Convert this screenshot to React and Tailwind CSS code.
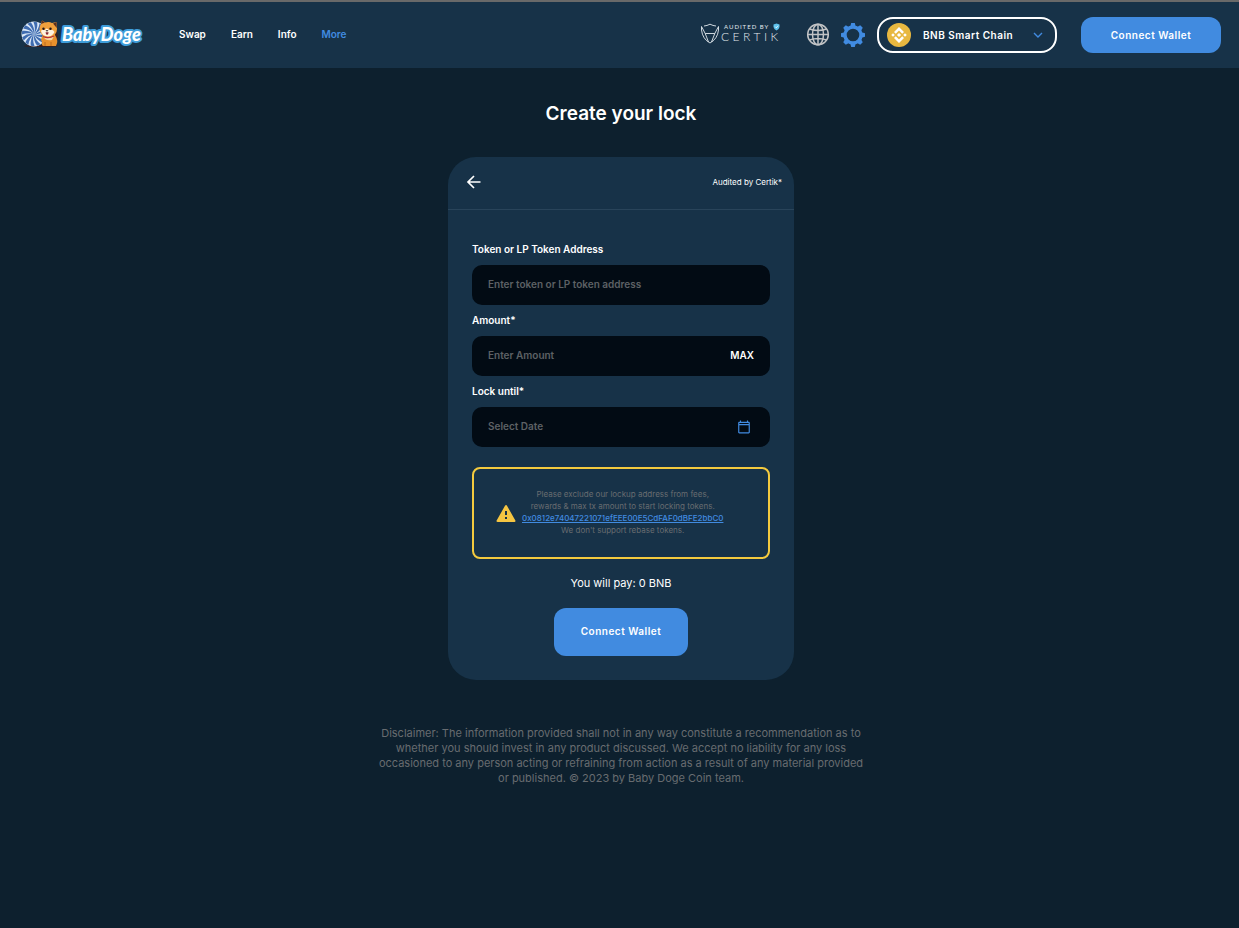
import { useId } from "react";

const spokes = Array.from({ length: 12 }, (_, i) => i * 30);
const teeth = Array.from({ length: 8 }, (_, i) => i * 45);

function Logo() {
  return (
    <svg viewBox="0 0 124 30" className="h-[30px] w-[124px] shrink-0" role="img" aria-label="BabyDoge">
      <ellipse cx="20" cy="26" rx="17" ry="1" fill="#3b1f1c" />
      <circle cx="13" cy="14" r="12.5" fill="#dbe8f7" />
      {spokes.map((a) => (
        <path key={a} d="M13 14Q15 8 12.4 1.8L16.2 2.2Q17 9 13 14Z" fill="#3f6cb0" transform={`rotate(${a} 13 14)`} />
      ))}
      <path d="M32 16Q32 11 35 10Q38 14 36 20L32 22Z" fill="#3a2320" />
      <path d="M22 15Q19 19 21 22Q20 26 23 26H35Q38 21 34 15Z" fill="#e8912d" />
      <path d="M22 16Q27 20 33 16L31 20Q27 21 24 19Z" fill="#f6d6a3" />
      <path d="M24 26V22M30 26V22" stroke="#a85c1c" strokeWidth="0.7" />
      <path d="M18.500 9Q18.500 6 20 4L21 0.500L24.500 2.500Q28 1.500 31 3L35.500 2L36 9Q36 16 28 17Q19 16.500 18.500 9Z" fill="#f0a03c" />
      <path d="M20 4L21 0.500L24 2.600ZM35.500 2L32 3.600L35.800 8Z" fill="#5b3020" />
      <path d="M20 11Q21 9 24 10Q25.500 7 28 10Q32 9 33.500 12Q31 16.500 27 16.500Q21 16 20 11Z" fill="#fff3df" />
      <circle cx="22.500" cy="8.800" r="1.200" fill="#241619" />
      <circle cx="29.500" cy="8.800" r="1.200" fill="#241619" />
      <path d="M24.500 10.200H27.500L26 11.800Z" fill="#241619" />
      <path d="M24.600 12.200H27.600Q27.500 14.800 26 14.800Q24.800 14.800 24.600 12.200Z" fill="#8c2a34" />
      <path d="M22 16.500Q27 19 33 16" stroke="#b62e38" strokeWidth="1.200" fill="none" />
      <text
        x="41"
        y="21"
        fontSize="18"
        fontWeight="900"
        fontStyle="italic"
        fill="#ffffff"
        stroke="#3f9edb"
        strokeWidth="4"
        strokeLinejoin="round"
        paintOrder="stroke"
        className="font-['Lato',sans-serif]"
      >
        BabyDoge
      </text>
    </svg>
  );
}

function Certik() {
  return (
    <svg viewBox="0 0 82 24" className="h-6 w-[82px] shrink-0" role="img" aria-label="Audited by Certik" fill="none" stroke="#e2e9ee">
      <path
        d="M4 3Q7 2.800 10 1.200Q13 2.800 16 3M1.500 3.500V7Q2.500 16 10 20Q17.500 16 18.500 7V3.500L14.800 10.500H5.200ZM5.200 10.500L8.500 19M14.800 10.500L11.500 19"
        strokeWidth="0.900"
      />
      <text x="24" y="6" fontSize="6" fill="#e2e9ee" stroke="none" letterSpacing="1" className="font-['Lato',sans-serif]">
        AUDITED BY
      </text>
      <path d="M73.500 1.500L76.500 0.500L79.500 1.500V4Q79 6.500 76.500 7.500Q74 6.500 73.500 4Z" fill="#5ec3ee" stroke="none" />
      <path d="M75.200 3.700L76.300 4.800L78 2.700" stroke="#fff" strokeWidth="0.800" />
      <text x="21" y="18" fontSize="12" fill="#e2e9ee" stroke="none" letterSpacing="3.500" className="font-['Lato',sans-serif] font-light">
        CERTIK
      </text>
    </svg>
  );
}

function Globe() {
  return (
    <svg viewBox="0 0 24 24" className="size-6" fill="none" stroke="#c1c3c5" strokeWidth="1.500" aria-hidden="true">
      <circle cx="12" cy="11.500" r="10.300" />
      <ellipse cx="12" cy="11.500" rx="5.500" ry="10.300" />
      <path d="M12 1.200V21.800M1.700 11.500H22.300M3.500 6Q12 9 20.500 6M3.500 17Q12 14 20.500 17" />
    </svg>
  );
}

function Gear() {
  return (
    <svg viewBox="0 0 24 24" className="size-6" aria-hidden="true">
      <circle cx="12" cy="12" r="8" fill="none" stroke="#418be0" strokeWidth="3.400" />
      {teeth.map((a) => (
        <path key={a} d="M9.300 3.500L10.200 0H13.800L14.700 3.500Z" fill="#418be0" transform={`rotate(${a} 12 12)`} />
      ))}
    </svg>
  );
}

function Bnb() {
  return (
    <svg viewBox="0 0 24 24" className="size-6 shrink-0" aria-hidden="true">
      <circle cx="12" cy="12" r="12" fill="#e8b840" />
      <path
        fill="#fff"
        d="M8.800 10.700L12 7.500L15.200 10.700L17 8.900L12 3.900L7 8.900ZM4.200 12L6 10.200L7.800 12L6 13.800ZM8.800 13.300L12 16.500L15.200 13.300L17 15.100L12 20.100L7 15.100ZM16.200 12L18 10.200L19.800 12L18 13.800ZM12 9.900L14.100 12L12 14.100L9.900 12Z"
      />
    </svg>
  );
}

function Calendar() {
  return (
    <svg viewBox="0 0 24 24" className="size-[14px]" fill="#418be0" aria-hidden="true">
      <path d="M20 3h-1V1h-2v2H7V1H5v2H4c-1.100 0-2 .9-2 2v16c0 1.100.9 2 2 2h16c1.100 0 2-.9 2-2V5c0-1.100-.9-2-2-2zm0 2v2H4V5h16zM4 21V9h16v12z" />
    </svg>
  );
}

function Field({ label, placeholder, children }) {
  const id = useId();
  return (
    <div>
      <label htmlFor={id} className="block text-[10px] leading-4 font-semibold">
        {label}
      </label>
      <div className="mt-2 mb-[7px] flex h-10 items-center rounded-[10px] bg-[#020b14] px-4">
        <input
          id={id}
          type="text"
          placeholder={placeholder}
          className="h-full min-w-0 flex-1 bg-transparent pb-[2px] text-[10px] font-semibold text-white outline-none placeholder:text-[#5d6165]"
        />
        {children}
      </div>
    </div>
  );
}

export default function App() {
  return (
    <div className="flex min-h-screen flex-col border-t-2 border-[#696969] bg-[#0d202e] font-['Inter',sans-serif] text-white">
      <header className="flex h-[66px] items-center bg-[#173248] pr-[18px] pl-[21px]">
        <Logo />
        <nav className="ml-[34px] flex gap-[25px] pb-[2px] text-[10px] font-semibold">
          <a href="#swap">Swap</a>
          <a href="#earn">Earn</a>
          <a href="#info">Info</a>
          <a href="#more" className="text-[#418be0]">More</a>
        </nav>
        <div className="ml-auto flex items-center">
          <Certik />
          <button type="button" aria-label="Language" className="ml-6">
            <Globe />
          </button>
          <button type="button" aria-label="Settings" className="ml-[11px]">
            <Gear />
          </button>
          <button type="button" className="ml-3 flex h-9 w-[180px] items-center rounded-2xl border-2 border-white px-2 text-[10px] font-semibold tracking-wider">
            <Bnb />
            <span className="ml-3">BNB Smart Chain</span>
            <svg viewBox="0 0 10 6" className="mr-1 ml-auto h-[6px] w-[10px]" fill="none" stroke="#418be0" strokeWidth="1.400" aria-hidden="true">
              <path d="M1 1L5 5L9 1" />
            </svg>
          </button>
          <button type="button" className="ml-6 h-9 w-[140px] rounded-xl bg-[#418be0] text-[10px] font-semibold tracking-wider">
            Connect Wallet
          </button>
        </div>
      </header>

      <main className="flex flex-col items-center pr-4 pl-[19px]">
        <h1 className="mt-8 text-[19px] leading-7 font-semibold">Create your lock</h1>

        <section className="mt-[29px] w-full max-w-[346px] rounded-[28px] bg-[#173248]">
          <div className="flex h-[53px] items-center justify-between border-b border-[#29445a] pr-3 pb-[2px] pl-[18px]">
            <button type="button" aria-label="Back">
              <svg viewBox="0 0 16 16" className="size-4" fill="none" stroke="#fff" strokeWidth="1.700" aria-hidden="true">
                <path d="M14.500 8H2.500M8 2L2 8L8 14" />
              </svg>
            </button>
            <span className="text-[8px]">Audited by Certik*</span>
          </div>

          <form className="flex flex-col px-6 pt-[31px] pb-6">
            <Field label="Token or LP Token Address" placeholder="Enter token or LP token address" />
            <Field label="Amount*" placeholder="Enter Amount">
              <button type="button" className="pb-[2px] text-[10px] font-semibold">
                MAX
              </button>
            </Field>
            <Field label="Lock until*" placeholder="Select Date">
              <button type="button" aria-label="Open calendar" className="mr-[3px]">
                <Calendar />
              </button>
            </Field>

            <div className="mt-[13px] flex h-[92px] items-center rounded-lg border-2 border-[#f4ca3e] pl-[22px]">
              <svg viewBox="0 0 22 19" className="h-[19px] w-[22px] shrink-0" aria-hidden="true">
                <path d="M10 2L1.500 17H18.500Z" fill="#f5c542" stroke="#f5c542" strokeWidth="2" strokeLinejoin="round" />
                <path d="M9 7H11V11H9ZM9 13H11V15H9Z" fill="#173248" />
              </svg>
              <p className="ml-1 pb-[2px] text-center text-[8px] leading-3 whitespace-nowrap text-[#686c70]">
                Please exclude our lockup address from fees,
                <br />
                rewards &amp; max tx amount to start locking tokens.
                <br />
                <a href="#address" className="font-medium text-[#418be0] underline">
                  0x0812e74047221071efEEE00E5CdFAF0dBFE2bbC0
                </a>
                <br />
                We don't support rebase tokens.
              </p>
            </div>

            <p className="mt-4 text-center text-[11px] leading-4">You will pay: 0 BNB</p>
            <button type="button" className="mt-[17px] h-12 w-[134px] self-center rounded-xl bg-[#418be0] pb-[2px] text-[10px] font-semibold tracking-wider">
              Connect Wallet
            </button>
          </form>
        </section>

        <p className="mt-[46px] text-center text-[11px] leading-[15px] text-[#686c70]">
          Disclaimer: The information provided shall not in any way constitute a recommendation as to
          <br />
          whether you should invest in any product discussed. We accept no liability for any loss
          <br />
          occasioned to any person acting or refraining from action as a result of any material provided
          <br />
          or published. © 2023 by Baby Doge Coin team.
        </p>
      </main>
    </div>
  );
}
